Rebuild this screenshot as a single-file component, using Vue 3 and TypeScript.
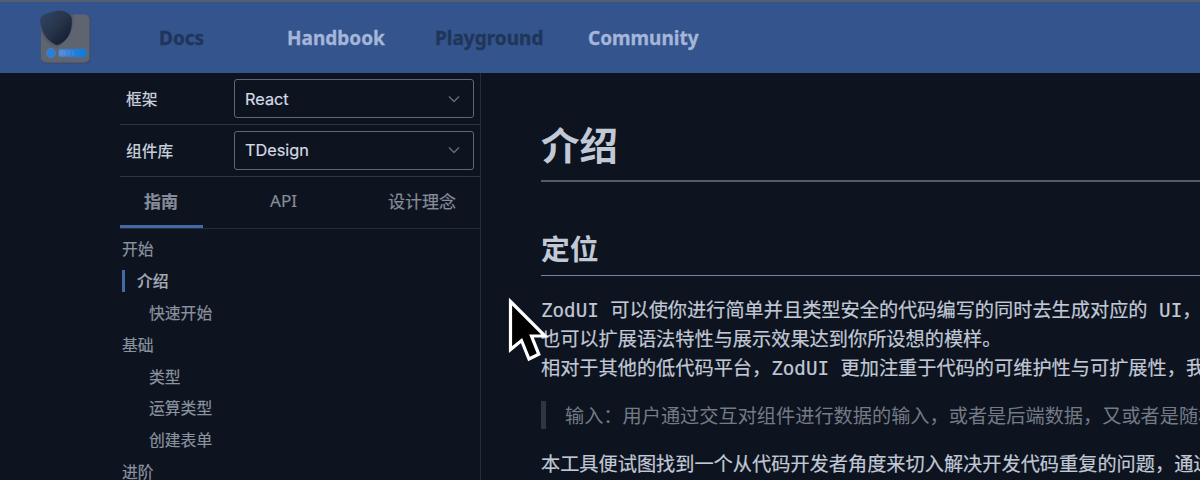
<script setup lang="ts">
interface NavItem { label: string; dim: boolean }
interface MenuItem { label: string; level: 0 | 1; active?: boolean }

const nav: NavItem[] = [
  { label: 'Docs', dim: true },
  { label: 'Handbook', dim: false },
  { label: 'Playground', dim: true },
  { label: 'Community', dim: false },
]
const selects = [
  { label: '框架', value: 'React' },
  { label: '组件库', value: 'TDesign' },
]
const menu: MenuItem[] = [
  { label: '开始', level: 0 },
  { label: '介绍', level: 1, active: true },
  { label: '快速开始', level: 1 },
  { label: '基础', level: 0 },
  { label: '类型', level: 1 },
  { label: '运算类型', level: 1 },
  { label: '创建表单', level: 1 },
  { label: '进阶', level: 0 },
]
</script>

<template>
  <div class="page">
    <header class="header">
      <svg class="logo" width="60" height="60" viewBox="0 0 60 60">
        <defs>
          <linearGradient id="shield" x1="0" y1="0" x2="1" y2="1">
            <stop offset="0" stop-color="#304668" />
            <stop offset="0.45" stop-color="#29364c" />
            <stop offset="1" stop-color="#0d192a" />
          </linearGradient>
          <linearGradient id="bar" x1="0" y1="0" x2="1" y2="0">
            <stop offset="0" stop-color="#5d8dd0" />
            <stop offset="0.5" stop-color="#2680dc" />
            <stop offset="1" stop-color="#087cdb" />
          </linearGradient>
        </defs>
        <rect x="7" y="9.500" width="50" height="48.500" rx="5" fill="#3d4a66" opacity="0.6" />
        <rect x="7" y="8.500" width="48.500" height="48" rx="5" fill="#5e6470" />
        <path d="M7 13Q7 8.500 12 8.500H39.500Q41 31 23 41.500Q12 38 7 27z" fill="#444c5b" opacity="0.4" />
        <path d="M6 14Q7 9 12 8Q20 4.500 26 4.500Q37 6 37.800 13C38.500 27 33 35 25 38.600Q23 39.400 21 38.500C12 34 7 25 6 14z" fill="url(#shield)" />
        <circle cx="17" cy="47" r="4.500" fill="#2581df" stroke="#5c78ab" stroke-width="1" />
        <rect x="24.500" y="43" width="28" height="8" rx="2" fill="url(#bar)" stroke="#4670ae" stroke-width="0.800" />
        <path d="M28 45v4M31 45v4M35 45v4M39 45v4" stroke="#8fa9d5" stroke-width="1" opacity="0.35" />
      </svg>
      <nav class="nav">
        <a v-for="n in nav" :key="n.label" :class="['link', n.label.toLowerCase(), { dim: n.dim }]">{{ n.label }}</a>
      </nav>
    </header>
    <div class="body">
      <aside class="sidebar">
        <div v-for="s in selects" :key="s.label" class="field">
          <span class="field-label">{{ s.label }}</span>
          <div class="select">
            <span>{{ s.value }}</span>
            <svg width="14" height="10" viewBox="0 0 14 10"><path d="M2 2.500l5 5 5-5" fill="none" stroke="#646a76" stroke-width="1.500" /></svg>
          </div>
        </div>
        <div class="tabs">
          <span class="tab on">指南</span>
          <span class="tab api">API</span>
          <span class="tab">设计理念</span>
        </div>
        <ul class="menu">
          <li v-for="m in menu" :key="m.label" :class="{ child: m.level === 1, active: m.active }"><span>{{ m.label }}</span></li>
        </ul>
      </aside>
      <main class="content">
        <h1>介绍</h1>
        <h2>定位</h2>
        <p>ZodUI 可以使你进行简单并且类型安全的代码编写的同时去生成对应的 UI，<br>也可以扩展语法特性与展示效果达到你所设想的模样。<br>相对于其他的低代码平台，ZodUI 更加注重于代码的可维护性与可扩展性，我</p>
        <blockquote>输入：用户通过交互对组件进行数据的输入，或者是后端数据，又或者是随机</blockquote>
        <p>本工具便试图找到一个从代码开发者角度来切入解决开发代码重复的问题，通过</p>
      </main>
    </div>
    <svg class="cursor" width="50" height="72" viewBox="0 0 50 72">
      <path d="M5.500 5.500L40 40H26.500L33.800 58.300L24 63L16.500 44.500L5.500 53.500z" fill="#000" stroke="#fff" stroke-width="3.200" />
    </svg>
  </div>
</template>

<style>
body { margin: 0; background: #0d141f; overflow: hidden; }
</style>

<style scoped>
.page { position: relative; width: 1200px; height: 480px; overflow: hidden; background: #0d141f; color: #c1c8d6; font-family: "Noto Sans", "Noto Sans CJK SC", sans-serif; }
.header { box-sizing: border-box; height: 73px; display: flex; background: #33548d; border-top: 2px solid #555e70; }
.logo { margin: 4px 0 0 34px; flex: none; }
.nav { display: flex; padding-left: 65px; height: 71px; line-height: 73px; font-size: 19px; font-weight: 700; }
.link { color: #a5b6d9; white-space: nowrap; -webkit-text-stroke: 0.3px currentColor; }
.link.dim { color: #203558; }
.docs { width: 128px; }
.handbook { width: 148px; }
.playground { width: 153px; }
.body { display: flex; height: 407px; }
.sidebar { box-sizing: border-box; width: 481px; flex: none; padding-left: 120px; border-right: 1px solid #252c37; }
.field { box-sizing: border-box; height: 52px; display: flex; align-items: center; padding: 0 6px; border-bottom: 1px solid #303640; }
.field + .field { padding-bottom: 1px; }
.field-label { width: 108px; font-size: 15.800px; font-weight: 500; color: #c6cddb; }
.select { box-sizing: border-box; width: 240px; height: 39px; display: flex; align-items: center; justify-content: space-between; padding: 0 12px 0 10px; border: 1px solid #626873; border-radius: 3px; font-family: Inter, sans-serif; font-size: 16.300px; line-height: 20px; color: #d5dae4; }
.select span { -webkit-text-stroke: 0.2px currentColor; }
.tabs { box-sizing: border-box; height: 52px; display: flex; justify-content: space-between; border-bottom: 1px solid #252c37; font-size: 17px; line-height: 50px; color: #858c99; }
.tab { padding: 0 24px 0 22px; -webkit-text-stroke: 0.2px currentColor; }
.tab.api { line-height: 48px; }
.tab.on { box-sizing: border-box; width: 83px; height: 51px; padding-left: 24px; font-weight: 700; border-bottom: 3px solid #4668a5; }
.menu { list-style: none; margin: 4.500px 0 0; padding: 0 0 0 2px; font-size: 15.800px; color: #8b929f; }
.menu li { height: 31.800px; display: flex; align-items: center; -webkit-text-stroke: 0.2px currentColor; }
.menu li span { line-height: 22px; }
.menu .child { padding-left: 27px; }
.menu .active { padding-left: 0; font-weight: 500; color: #a4abb8; }
.menu .active span { border-left: 3px solid #4668a5; padding-left: 12px; }
.content { flex: 1; min-width: 0; padding-left: 60px; font-family: "DejaVu Sans Mono", "Noto Sans CJK SC", monospace; font-size: 19.200px; line-height: 28.800px; white-space: nowrap; }
h1 { box-sizing: border-box; margin: 44px 0 0; height: 65px; line-height: 60px; font-size: 38.400px; font-weight: 700; border-bottom: 2px solid #555b6b; }
h2 { box-sizing: border-box; margin: 42px 0 21px; height: 52px; line-height: 52px; font-size: 28.800px; font-weight: 700; border-bottom: 1px solid #76829f; }
p { margin: 0; -webkit-text-stroke: 0.2px currentColor; }
blockquote { margin: 18px 0 22px; padding-left: 19px; height: 28px; line-height: 32px; border-left: 5px solid #2d3744; color: #747b87; }
.cursor { position: absolute; left: 505px; top: 296px; }
</style>
